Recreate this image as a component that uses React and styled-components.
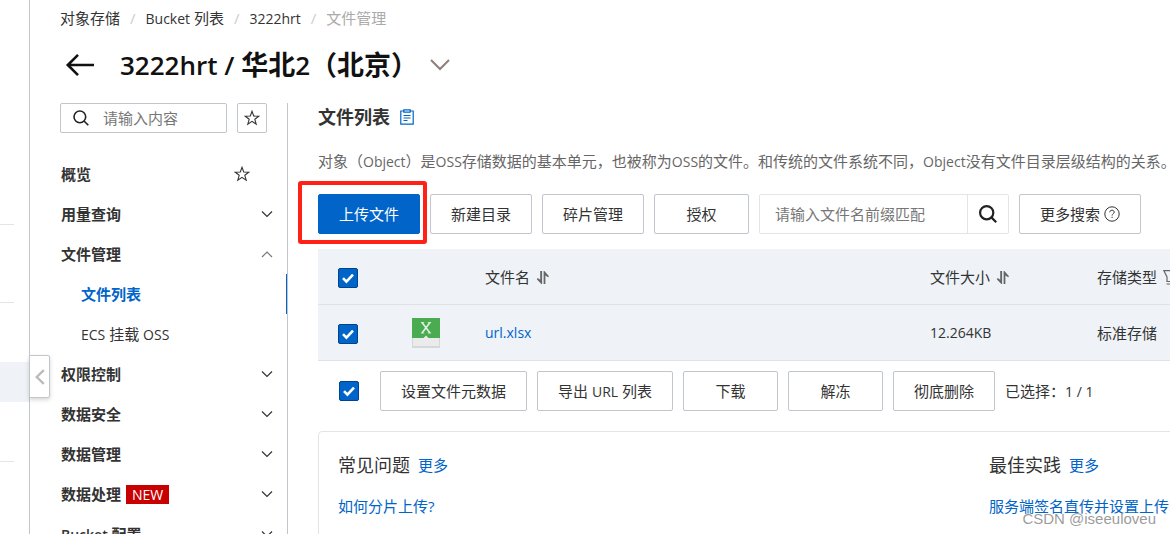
import styled, { createGlobalStyle } from "styled-components";

const GlobalStyle = createGlobalStyle`
  * {
    box-sizing: border-box;
  }

  body {
    margin: 0;
    background: #fff;
    color: #333;
    font: 15px/20px "Open Sans", "Noto Sans CJK SC", sans-serif;
  }

  a {
    color: #0064c8;
    text-decoration: none;
  }

  button,
  input {
    font: inherit;
    color: inherit;
  }
`;

const Page = styled.div`
  position: relative;
  display: flex;
  height: 100vh;
  overflow: hidden;
`;

/* collapsed product rail */
const Rail = styled.aside`
  position: relative;
  flex: none;
  width: 30px;
  border-right: 1px solid #c0c6cc;
`;

const RailGroup = styled.div`
  height: ${(p) => p.$height}px;
  padding-top: ${(p) => p.$top || 0}px;
  margin-right: 15px;
  border-bottom: 1px solid #e3e4e6;
`;

const RailActive = styled.div`
  height: 40px;
  margin-right: -15px;
  background: #eff3f8;
`;

const CollapseButton = styled.button`
  position: absolute;
  z-index: 1;
  top: 355px;
  left: 29px;
  display: flex;
  align-items: center;
  justify-content: center;
  width: 21px;
  height: 43px;
  padding: 0;
  border: 1px solid #c0c6cc;
  border-radius: 0 2px 2px 0;
  background: #fff;
  color: #bbb;
  box-shadow: 0 2px 4px rgba(0, 0, 0, 0.16);
`;

const Main = styled.main`
  flex: 1;
  min-width: 0;
  padding: 8px 0 0 30px;
`;

const Latin = styled.span`
  font-size: 14px;
`;

const Breadcrumb = styled.nav`
  display: flex;
  gap: 10px;
  height: 20px;

  a {
    color: #333;
  }
`;

const Muted = styled.span`
  color: #aaa;
`;

const Slash = styled.span`
  color: #ccc;
`;

const TitleBar = styled.header`
  display: flex;
  align-items: center;
  height: 40px;
  margin-top: 17px;
`;

const IconButton = styled.button`
  display: flex;
  padding: 0;
  border: 0;
  background: none;
  color: ${(p) => p.$color || "#333"};
`;

const Title = styled.h1`
  margin: 0 12px 0 20px;
  color: #111;
  font-size: 27px;
  line-height: 40px;
  font-weight: 700;
  white-space: pre;
`;

const TitleLatin = styled.span`
  font-size: 26px;
  font-weight: 600;
`;

const Columns = styled.div`
  display: flex;
  height: 100%;
  margin-top: 18px;
`;

const Sidebar = styled.aside`
  flex: none;
  width: 228px;
  border-right: 1px solid #c0c6cc;
`;

const SideTools = styled.div`
  display: flex;
  gap: 10px;
  margin-bottom: 21px;
`;

const SideSearch = styled.label`
  display: flex;
  align-items: center;
  gap: 14px;
  width: 167px;
  height: 30px;
  padding-left: 12px;
  border: 1px solid #c0c6cc;
  border-radius: 2px;

  input {
    flex: 1;
    min-width: 0;
    padding: 0;
    border: 0;
    outline: 0;
  }

  input::placeholder {
    color: #777;
    opacity: 1;
  }
`;

const StarButton = styled.button`
  display: flex;
  align-items: center;
  justify-content: center;
  width: 30px;
  height: 30px;
  padding: 0;
  border: 1px solid #c0c6cc;
  border-radius: 2px;
  background: #fff;
`;

const Menu = styled.ul`
  margin: 0;
  padding: 0;
  list-style: none;
`;

const MenuItem = styled.li`
  display: flex;
  align-items: center;
  height: 40px;
  padding: 0 ${(p) => (p.$starred ? 37 : 14)}px 0 ${(p) => (p.$sub ? 21 : 1)}px;
  border-right: ${(p) => (p.$active ? "1px solid #0064c8" : "0")};
  font-weight: ${(p) => (p.$sub && !p.$active ? 400 : 600)};

  a {
    color: ${(p) => (p.$active ? "#0064c8" : "#333")};
  }

  svg {
    margin-left: auto;
  }
`;

const NewTag = styled.span`
  margin-left: 5px;
  padding: 0 6px;
  background: #c80000;
  color: #fff;
  font-size: 14px;
  line-height: 19px;
  font-weight: 400;
`;

const Content = styled.section`
  flex: 1;
  min-width: 1372px;
  padding-left: 30px;
`;

const SectionTitle = styled.h2`
  display: flex;
  align-items: center;
  gap: 10px;
  height: 28px;
  margin: 0 0 20px;
  font-size: 18px;
  line-height: 28px;
`;

const Intro = styled.p`
  height: 20px;
  margin: 0 0 23px;
  color: #666;
  white-space: nowrap;
`;

const Toolbar = styled.div`
  display: flex;
  gap: 10px;
  margin-bottom: 15px;
`;

const Button = styled.button`
  display: flex;
  align-items: center;
  justify-content: center;
  gap: 4px;
  min-width: 95px;
  height: 40px;
  padding: 0 20px;
  border: 1px solid ${(p) => (p.$primary ? "#0064c8" : "#c0c6cc")};
  border-radius: 2px;
  background: ${(p) => (p.$primary ? "#0064c8" : "#fff")};
  color: ${(p) => (p.$primary ? "#fff" : "#333")};
  white-space: pre;
`;

const Highlight = styled.div`
  position: relative;

  &::after {
    content: "";
    position: absolute;
    inset: -13px -7px -10px -20px;
    border: 4px solid #ff2116;
    border-radius: 3px;
    pointer-events: none;
  }
`;

const FileSearch = styled.div`
  display: flex;
  width: 250px;
  height: 40px;
  border: 1px solid #e3e4e6;
  border-radius: 2px;

  input {
    flex: 1;
    min-width: 0;
    padding: 0 15px;
    border: 0;
    outline: 0;
  }

  input::placeholder {
    color: #777;
    opacity: 1;
  }

  button {
    align-items: center;
    justify-content: center;
    width: 41px;
    border-left: 1px solid #e3e4e6;
  }
`;

const Table = styled.table`
  width: 100%;
  border-collapse: separate;
  border-spacing: 0;
  table-layout: fixed;
  background: #eff3f8;

  th,
  td {
    height: 56px;
    padding: 0;
    border-bottom: 1px solid #dee2e6;
    font-weight: 400;
    text-align: left;
    vertical-align: middle;
  }

  th:first-child,
  td:first-child {
    padding: 2px 0 0 20px;
  }
`;

const HeadLabel = styled.span`
  display: flex;
  align-items: center;
  gap: 6px;
`;

const Checkbox = styled.input.attrs({ type: "checkbox" })`
  appearance: none;
  display: block;
  width: 20px;
  height: 20px;
  margin: 0;
  border: 1px solid #00448c;
  border-radius: 2px;
  background: #fff;

  &:checked {
    background: #0064c8
      url("data:image/svg+xml,%3Csvg xmlns='http://www.w3.org/2000/svg' viewBox='0 0 18 18'%3E%3Cpath d='M4 9.2l3.4 3.5L14 5.6' fill='none' stroke='white' stroke-width='2.6'/%3E%3C/svg%3E");
  }
`;

const Batch = styled.div`
  display: flex;
  align-items: center;
  gap: 10px;
  margin: 10px 0 20px;
  padding-left: 21px;

  input {
    margin-right: 11px;
  }
`;

const Help = styled.div`
  display: grid;
  grid-template-columns: 1fr 1fr;
  height: 200px;
  padding: 19px;
  border: 1px solid #e3e4e6;
  border-radius: 4px;
`;

const HelpHead = styled.div`
  display: flex;
  align-items: center;
  gap: 8px;
  height: 28px;
  margin-bottom: 17px;

  h3 {
    margin: 0;
    font-size: 18px;
    line-height: 28px;
    font-weight: 400;
  }
`;

const Watermark = styled.div`
  position: absolute;
  right: 14px;
  bottom: 5px;
  color: rgba(110, 110, 110, 0.7);
  font: 15px/20px "Liberation Sans", sans-serif;
  text-shadow: 0 0 1px #fff;
`;

const SearchIcon = ({ size = 18, width = 1.6 }) => (
  <svg width={size} height={size} viewBox="0 0 18 18" fill="none" stroke="#222" strokeWidth={width}>
    <circle cx="7.7" cy="7.7" r="6.6" />
    <path d="M12.4 12.4l4.8 4.8" />
  </svg>
);

const StarIcon = () => (
  <svg width="16" height="16" viewBox="0 0 16 16" fill="none" stroke="#333" strokeWidth="1.1">
    <path d="M8 1.3l1.7 4.7 5.1.2-4 3.1 1.4 4.8L8 11.3l-4.2 2.8 1.4-4.8-4-3.1 5.1-.2z" />
  </svg>
);

const Chevron = ({ up }) => (
  <svg width="12" height="12" viewBox="0 0 12 12" fill="none" stroke={up ? "#777" : "#333"} strokeWidth="1.2">
    <path d={up ? "M1 9l5-5 5 5" : "M1 3.5l5 5 5-5"} />
  </svg>
);

const SortIcon = () => (
  <svg width="14" height="14" viewBox="0 0 14 14" fill="#666">
    <path d="M4.2 1h1.9v13h-.8L.8 9.2l1-1.1 2.4 1.6zM7.6 14h1.8V5.4l2.8 1.8.8-1L8.4 1h-.8z" />
  </svg>
);

const FilterIcon = () => (
  <svg width="14" height="16" viewBox="0 0 14 16" fill="none" stroke="#666" strokeWidth="1.2">
    <path d="M.8 1.6h12.4L10 8v4.5H4V8zM3.5 15h7" />
  </svg>
);

const ClipboardIcon = () => (
  <svg width="14" height="16" viewBox="0 0 14 16" fill="none" stroke="#0064c8" strokeWidth="1.2">
    <path d="M3.5 2H.8v13.2h12.4V2h-2.7M3.8.8h6.4v2.4H3.8zM3.5 6.5h7M3.5 9h7M3.5 11.5h4" />
  </svg>
);

const HelpIcon = () => (
  <svg width="16" height="16" viewBox="0 0 16 16" fill="none" stroke="#333" strokeWidth="1">
    <circle cx="8" cy="8" r="7.2" />
    <path d="M5.8 6.3c0-1.3.9-2.1 2.2-2.1s2.2.8 2.2 1.9c0 1.5-2.1 1.7-2.1 3.4M8.1 10.8v1.2" />
  </svg>
);

const SheetIcon = () => (
  <svg width="28" height="30" viewBox="0 0 28 30" display="block">
    <path d="M0 0h28v30H0z" fill="#d5d8d8" />
    <path d="M1 20h26v8H1z" fill="#ebebeb" />
    <path d="M0 0h28v20H0z" fill="#4bab50" />
    <path d="M11.5 20l2.5-2.5 2.5 2.5z" fill="#ebebeb" />
    <path d="M10 4.5l8 10.5M18 4.5L10 15" stroke="#e4f3e5" strokeWidth="1.5" fill="none" />
    <path d="M8.8 4.5h3.4M15.8 4.5h3.4M8.8 15h3.4M15.8 15h3.4" stroke="#e4f3e5" strokeWidth=".8" />
  </svg>
);

const menu = [
  { label: "概览", starred: true },
  { label: "用量查询" },
  { label: "文件管理", open: true },
  { label: "文件列表", sub: true, active: true },
  { label: <><Latin>ECS</Latin> 挂载 <Latin>OSS</Latin></>, sub: true },
  { label: "权限控制" },
  { label: "数据安全" },
  { label: "数据管理" },
  { label: "数据处理", isNew: true },
  { label: <><Latin>Bucket</Latin> 配置</> },
];

export default function App() {
  return (
    <Page>
      <GlobalStyle />
      <Rail>
        <RailGroup $height={225} />
        <RailGroup $height={78} />
        <RailGroup $height={159} $top={59}>
          <RailActive />
        </RailGroup>
      </Rail>
      <CollapseButton aria-label="收起">
        <svg width="10" height="16" viewBox="0 0 10 16" fill="none" stroke="currentColor" strokeWidth="2.4">
          <path d="M8.8 1.2L1.8 8l7 6.8" />
        </svg>
      </CollapseButton>

      <Main>
        <Breadcrumb>
          <a href="#oss">对象存储</a>
          <Slash>/</Slash>
          <a href="#buckets"><Latin>Bucket</Latin> 列表</a>
          <Slash>/</Slash>
          <a href="#bucket"><Latin>3222hrt</Latin></a>
          <Slash>/</Slash>
          <Muted>文件管理</Muted>
        </Breadcrumb>

        <TitleBar>
          <IconButton aria-label="返回" $color="#111">
            <svg width="40" height="24" viewBox="0 0 40 24" fill="none" stroke="currentColor" strokeWidth="2.6">
              <path d="M18 1.8L7.8 12 18 22.2M8 12h26" />
            </svg>
          </IconButton>
          <Title><TitleLatin>3222hrt / </TitleLatin>华北<TitleLatin>2</TitleLatin>（北京）</Title>
          <IconButton aria-label="切换" $color="#8c8078">
            <svg width="20" height="12" viewBox="0 0 20 12" fill="none" stroke="currentColor" strokeWidth="2">
              <path d="M1 1l9 9 9-9" />
            </svg>
          </IconButton>
        </TitleBar>

        <Columns>
          <Sidebar>
            <SideTools>
              <SideSearch>
                <SearchIcon size={16} width={1.8} />
                <input aria-label="搜索菜单" placeholder="请输入内容" />
              </SideSearch>
              <StarButton aria-label="收藏"><StarIcon /></StarButton>
            </SideTools>
            <Menu>
              {menu.map((item, i) => (
                <MenuItem key={i} $sub={item.sub} $active={item.active} $starred={item.starred}>
                  <a href="#menu">{item.label}</a>
                  {item.isNew && <NewTag>NEW</NewTag>}
                  {item.starred && <StarIcon />}
                  {!item.sub && !item.starred && <Chevron up={item.open} />}
                </MenuItem>
              ))}
            </Menu>
          </Sidebar>

          <Content>
            <SectionTitle>文件列表 <ClipboardIcon /></SectionTitle>
            <Intro>
              对象（<Latin>Object</Latin>）是<Latin>OSS</Latin>存储数据的基本单元，也被称为<Latin>OSS</Latin>的文件。和传统的文件系统不同，<Latin>Object</Latin>没有文件目录层级结构的关系。
            </Intro>

            <Toolbar>
              <Highlight><Button $primary>上传文件</Button></Highlight>
              <Button>新建目录</Button>
              <Button>碎片管理</Button>
              <Button>授权</Button>
              <FileSearch>
                <input aria-label="文件名前缀" placeholder="请输入文件名前缀匹配" />
                <IconButton aria-label="搜索"><SearchIcon width={2.2} /></IconButton>
              </FileSearch>
              <Button>更多搜索<HelpIcon /></Button>
            </Toolbar>

            <Table>
              <colgroup>
                <col width="94" />
                <col width="73" />
                <col width="445" />
                <col width="167" />
                <col />
              </colgroup>
              <thead>
                <tr>
                  <th><Checkbox defaultChecked aria-label="全选" /></th>
                  <th />
                  <th><HeadLabel>文件名 <SortIcon /></HeadLabel></th>
                  <th><HeadLabel>文件大小 <SortIcon /></HeadLabel></th>
                  <th><HeadLabel>存储类型 <FilterIcon /></HeadLabel></th>
                </tr>
              </thead>
              <tbody>
                <tr>
                  <td><Checkbox defaultChecked aria-label="选择 url.xlsx" /></td>
                  <td><SheetIcon /></td>
                  <td><a href="#file"><Latin>url.xlsx</Latin></a></td>
                  <td><Latin>12.264KB</Latin></td>
                  <td>标准存储</td>
                </tr>
              </tbody>
            </Table>

            <Batch>
              <Checkbox defaultChecked aria-label="选择全部文件" />
              <Button>设置文件元数据</Button>
              <Button><span>导出 <Latin>URL</Latin> 列表</span></Button>
              <Button>下载</Button>
              <Button>解冻</Button>
              <Button>彻底删除</Button>
              <span>已选择：<Latin>1 / 1</Latin></span>
            </Batch>

            <Help>
              <div>
                <HelpHead><h3>常见问题</h3><a href="#faq">更多</a></HelpHead>
                <a href="#multipart">如何分片上传?</a>
              </div>
              <div>
                <HelpHead><h3>最佳实践</h3><a href="#practice">更多</a></HelpHead>
                <a href="#callback">服务端签名直传并设置上传回调</a>
              </div>
            </Help>
          </Content>
        </Columns>
      </Main>
      <Watermark>CSDN @iseeuloveu</Watermark>
    </Page>
  );
}
